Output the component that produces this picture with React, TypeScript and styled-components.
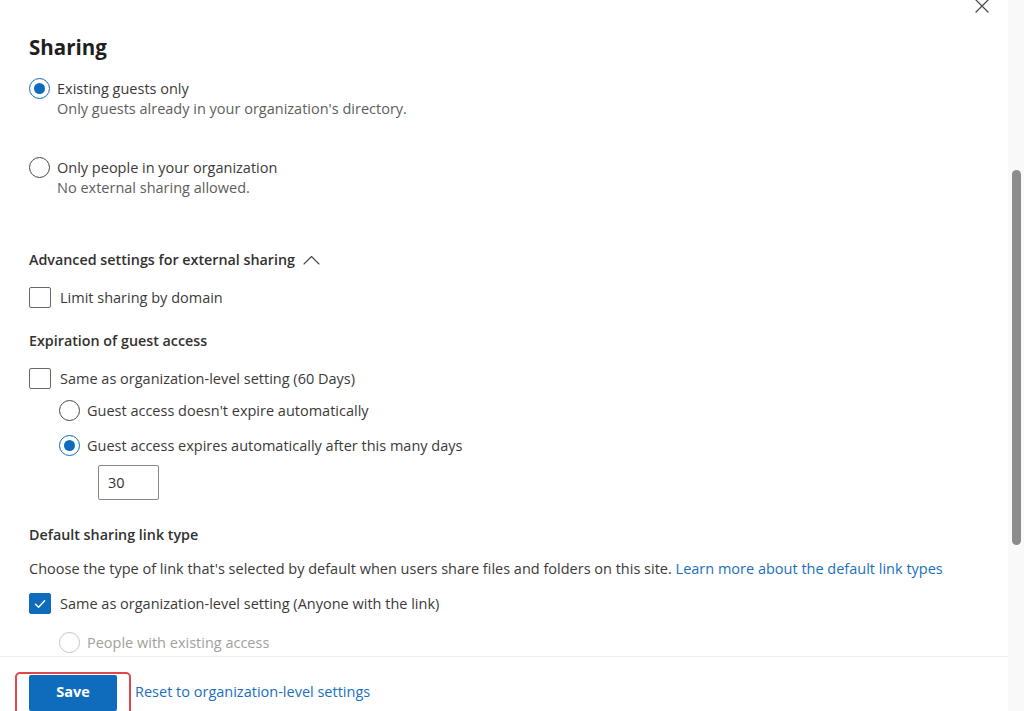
import React from "react";
import styled, { createGlobalStyle } from "styled-components";

const Global = createGlobalStyle`
  html, body { margin: 0; padding: 0; background: #ffffff; }
  body { font-family: "Open Sans", "Noto Sans", Arial, sans-serif; color: #323130; }
  * { box-sizing: border-box; }
`;

const FONT = 14.5;

const Panel = styled.div`
  position: relative;
  display: flex;
  width: 1024px;
  height: 711px;
  overflow: hidden;
  background: #fff;
`;

const Main = styled.div`
  flex: 1;
  display: flex;
  flex-direction: column;
  min-width: 0;
`;

const Body = styled.div`
  flex: 1;
  overflow: hidden;
  padding: 33px 0 0 29px;
  display: flex;
  flex-direction: column;
`;

const Heading = styled.h2`
  margin: 0;
  font-size: 20.5px;
  line-height: 28px;
  font-weight: 700;
  color: #201f1e;
`;

const Option = styled.div<{ $mt: number; $indent?: number; $disabled?: boolean }>`
  display: flex;
  align-items: flex-start;
  gap: 7px;
  margin-top: ${(p) => p.$mt}px;
  margin-left: ${(p) => p.$indent ?? 0}px;
  color: ${(p) => (p.$disabled ? "#a19f9d" : "#3b3a39")};
`;

const Radio = styled.span<{ $checked?: boolean; $disabled?: boolean }>`
  flex: none;
  width: 21px;
  height: 21px;
  border-radius: 50%;
  border: 1px solid
    ${(p) => (p.$disabled ? "#c8c6c4" : p.$checked ? "#0f6cbd" : "#4a4847")};
  display: flex;
  align-items: center;
  justify-content: center;
  background: #fff;
  &::after {
    content: "";
    display: ${(p) => (p.$checked ? "block" : "none")};
    width: 11px;
    height: 11px;
    border-radius: 50%;
    background: #0f6cbd;
  }
`;

const Check = styled.span<{ $checked?: boolean }>`
  flex: none;
  width: 22px;
  height: 21px;
  border-radius: 2px;
  border: 1px solid ${(p) => (p.$checked ? "#0f6cbd" : "#6b6967")};
  background: ${(p) => (p.$checked ? "#0f6cbd" : "#fff")};
  display: flex;
  align-items: center;
  justify-content: center;
`;

const TextCol = styled.div`
  display: flex;
  flex-direction: column;
`;

const Label = styled.span<{ $gap?: number }>`
  font-size: ${FONT}px;
  line-height: 21px;
  margin-left: ${(p) => p.$gap ?? 0}px;
`;

const Desc = styled.span`
  font-size: ${FONT}px;
  line-height: 20px;
  color: #605e5c;
`;

const SubHead = styled.div<{ $mt: number }>`
  display: flex;
  align-items: center;
  gap: 8px;
  margin-top: ${(p) => p.$mt}px;
  font-size: 14.3px;
  line-height: 21px;
  font-weight: 600;
  color: #323130;
`;

const NumberBox = styled.div`
  margin: 9px 0 0 69px;
  width: 61px;
  height: 35px;
  border: 1px solid #8a8886;
  border-radius: 2px;
  display: flex;
  align-items: center;
  padding-left: 9px;
  font-size: ${FONT}px;
`;

const Paragraph = styled.p`
  margin: 14px 0 0;
  font-size: ${FONT}px;
  line-height: 20px;
  color: #3b3a39;
  white-space: nowrap;
`;

const Link = styled.a`
  color: #1a6fbf;
  text-decoration: none;
`;

const Footer = styled.div`
  flex: none;
  height: 55px;
  border-top: 1px solid #eeedec;
  display: flex;
  align-items: flex-start;
  padding: 15px 0 0 15px;
  gap: 4px;
`;

const Highlight = styled.div`
  border: 2px solid #e0474c;
  border-radius: 5px;
  padding: 1px 12px 0 12px;
  height: 44px;
`;

const SaveButton = styled.button`
  width: 88px;
  height: 36px;
  border: none;
  border-radius: 2px;
  background: #0f6cbd;
  color: #fff;
  font-family: inherit;
  font-weight: 700;
  font-size: ${FONT}px;
  line-height: 20px;
  padding: 0 0 2px;
  cursor: pointer;
`;

const FooterLink = styled(Link)`
  margin-top: 10px;
  font-size: ${FONT}px;
  line-height: 20px;
`;

const ScrollTrack = styled.div`
  flex: none;
  width: 16px;
  background: #f9f9f9;
  padding: 170px 3px 0 4px;
`;

const ScrollThumb = styled.div`
  width: 9px;
  height: 375px;
  border-radius: 5px;
  background: #8c8c8c;
`;

const CloseButton = styled.button`
  position: absolute;
  top: -3px;
  left: 973px;
  width: 18px;
  height: 18px;
  padding: 0;
  border: none;
  background: transparent;
  display: flex;
  align-items: center;
  justify-content: center;
`;

const CheckMark = () => (
  <svg width="14" height="14" viewBox="0 0 14 14" fill="none">
    <path d="M2.5 7.2 L5.6 10.2 L11.6 3.8" stroke="#fff" strokeWidth="1.4" strokeLinecap="round" strokeLinejoin="round" />
  </svg>
);

const ChevronUp = () => (
  <svg width="17" height="10" viewBox="0 0 17 10" fill="none">
    <path d="M1 9 L8.5 1.5 L16 9" stroke="#484644" strokeWidth="1.1" strokeLinecap="round" strokeLinejoin="round" />
  </svg>
);

export default function App() {
  return (
    <>
      <Global />
      <Panel>
        <CloseButton aria-label="Close">
          <svg width="16" height="16" viewBox="0 0 16 16" fill="none">
            <path d="M2 2 L14 14 M14 2 L2 14" stroke="#484644" strokeWidth="1.2" strokeLinecap="round" />
          </svg>
        </CloseButton>
        <Main>
          <Body>
            <Heading>Sharing</Heading>
            <Option $mt={17}>
              <Radio $checked />
              <TextCol>
                <Label>Existing guests only</Label>
                <Desc>Only guests already in your organization's directory.</Desc>
              </TextCol>
            </Option>
            <Option $mt={38}>
              <Radio />
              <TextCol>
                <Label>Only people in your organization</Label>
                <Desc>No external sharing allowed.</Desc>
              </TextCol>
            </Option>
            <SubHead $mt={51}>
              Advanced settings for external sharing
              <ChevronUp />
            </SubHead>
            <Option $mt={17}>
              <Check />
              <Label $gap={2}>Limit sharing by domain</Label>
            </Option>
            <SubHead $mt={22}>Expiration of guest access</SubHead>
            <Option $mt={17}>
              <Check />
              <Label $gap={2}>Same as organization-level setting (60 Days)</Label>
            </Option>
            <Option $mt={11} $indent={30}>
              <Radio />
              <Label>Guest access doesn't expire automatically</Label>
            </Option>
            <Option $mt={14} $indent={30}>
              <Radio $checked />
              <Label>Guest access expires automatically after this many days</Label>
            </Option>
            <NumberBox>30</NumberBox>
            <SubHead $mt={24}>Default sharing link type</SubHead>
            <Paragraph>
              Choose the type of link that's selected by default when users share files and folders on this site.{" "}
              <Link href="#">Learn more about the default link types</Link>
            </Paragraph>
            <Option $mt={14}>
              <Check $checked>
                <CheckMark />
              </Check>
              <Label $gap={2}>Same as organization-level setting (Anyone with the link)</Label>
            </Option>
            <Option $mt={18} $indent={30} $disabled>
              <Radio $disabled />
              <Label>People with existing access</Label>
            </Option>
          </Body>
          <Footer>
            <Highlight>
              <SaveButton>Save</SaveButton>
            </Highlight>
            <FooterLink href="#">Reset to organization-level settings</FooterLink>
          </Footer>
        </Main>
        <ScrollTrack>
          <ScrollThumb />
        </ScrollTrack>
      </Panel>
    </>
  );
}
